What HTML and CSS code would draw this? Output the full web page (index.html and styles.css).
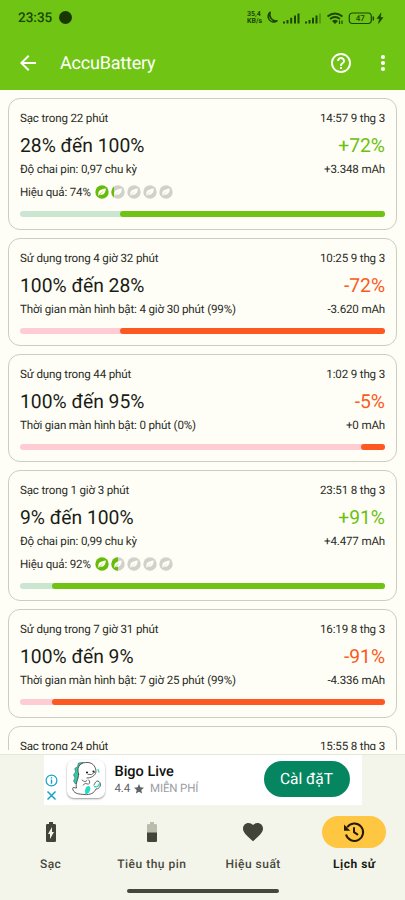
FILE: index.html
```html
<!DOCTYPE html>
<html lang="vi">
<head>
<meta charset="utf-8">
<title>AccuBattery</title>
<link rel="stylesheet" href="styles.css">
</head>
<body>
<svg width="0" height="0" class="defs">
  <defs>
    <symbol id="leaf" viewBox="0 0 14 14">
      <circle cx="7" cy="7" r="6.700" fill="currentColor"/>
      <path d="M3.400 9.600C2.900 5.800 5.600 4.300 10.800 3.600C10.800 8 8.400 10.700 4.700 9.600L3.800 10.700L3.100 10.300Z" fill="#fefef6"/>
      <path d="M4.700 9.400L7.800 6.700" stroke="currentColor" stroke-width=".5"/>
    </symbol>
  </defs>
</svg>
<div class="screen">
  <header class="top">
    <div class="status">
      <span class="clock">23:35</span><span class="dot"></span>
      <span class="speed"><span>35,4</span><span>KB/s</span></span>
      <svg class="sys" width="122" height="18" viewBox="0 0 122 18" fill="none" stroke="#194600">
        <path d="M5.200 3.200A5.300 5.300 0 1 0 12 11.800A6.300 6.300 0 0 1 5.200 3.200Z" stroke-width="1.500" stroke-linejoin="round"/>
        <path d="M19 14.500V12.500M22.500 14.500V11M26.200 14.500V8.800M30 14.500V6.500M33.500 14.500V4.500" stroke-width="2"/>
        <path d="M41 14.500V12.500M44.500 14.500V11M48 14.500V8.800M51.500 14.500V6.500" stroke-width="2"/>
        <path d="M55 14.500V4.500" stroke-width="1.800" opacity=".35"/>
        <path d="M62.500 7.500Q70 1.500 77.500 7.500M65 10Q70 6 75 10" stroke-width="1.700"/>
        <path d="M67 12Q70 9.500 73 12L70 15Z" fill="#194600" stroke="none"/>
        <path d="M74.500 11.500V15M77 11.500V15" stroke-width="1.200"/>
        <rect x="84.300" y="4" width="22" height="10.500" rx="3.200" stroke-width="1.200"/>
        <path d="M108.300 7.500V11.500" stroke-width="1.500"/>
        <text x="95.300" y="12.300" text-anchor="middle" class="level">47</text>
        <path d="M116 4L112 9.500H114.500L113.500 14.500L118 8.500H115.500Z" fill="#194600" stroke="#194600" stroke-width=".5"/>
      </svg>
    </div>
    <div class="appbar">
      <svg class="back" width="24" height="24" viewBox="0 0 24 24"><path d="M20 11H7.830L13.420 5.410L12 4L4 12L12 20L13.410 18.590L7.830 13H20Z" fill="#fff"/></svg>
      <h1>AccuBattery</h1>
      <svg class="help" width="24" height="24" viewBox="0 0 24 24"><path fill="#fff" d="M11 18h2v-2h-2v2zm1-16C6.480 2 2 6.480 2 12s4.480 10 10 10 10-4.480 10-10S17.520 2 12 2zm0 18c-4.410 0-8-3.590-8-8s3.590-8 8-8 8 3.590 8 8-3.590 8-8 8zm0-14c-2.210 0-4 1.790-4 4h2c0-1.100.9-2 2-2s2 .9 2 2c0 2-3 1.750-3 5h2c0-2.250 3-2.500 3-5 0-2.210-1.790-4-4-4z"/></svg>
      <svg class="more" width="24" height="24" viewBox="0 0 24 24" fill="#fff"><circle cx="12" cy="6" r="2.100"/><circle cx="12" cy="12" r="2.100"/><circle cx="12" cy="18" r="2.100"/></svg>
    </div>
  </header>

  <main class="list">
    <article class="card charge">
      <div class="row"><span>Sạc trong 22 phút</span><span>14:57 9 thg 3</span></div>
      <div class="row big"><span>28% đến 100%</span><span class="delta">+72%</span></div>
      <div class="row"><span>Độ chai pin: 0,97 chu kỳ</span><span>+3.348 mAh</span></div>
      <div class="row eff"><span>Hiệu quả: 74%</span><span class="leaves"><svg class="on"><use href="#leaf"/></svg><span class="part"><svg><use href="#leaf"/></svg><span class="fill slim"><svg class="on"><use href="#leaf"/></svg></span></span><svg><use href="#leaf"/></svg><svg><use href="#leaf"/></svg><svg><use href="#leaf"/></svg></span></div>
      <div class="bar"><i style="width:72.600%"></i></div>
    </article>
    <article class="card use">
      <div class="row"><span>Sử dụng trong 4 giờ 32 phút</span><span>10:25 9 thg 3</span></div>
      <div class="row big"><span>100% đến 28%</span><span class="delta">-72%</span></div>
      <div class="row"><span>Thời gian màn hình bật: 4 giờ 30 phút (99%)</span><span>-3.620 mAh</span></div>
      <div class="bar"><i style="width:72.600%"></i></div>
    </article>
    <article class="card use">
      <div class="row"><span>Sử dụng trong 44 phút</span><span>1:02 9 thg 3</span></div>
      <div class="row big"><span>100% đến 95%</span><span class="delta">-5%</span></div>
      <div class="row"><span>Thời gian màn hình bật: 0 phút (0%)</span><span>+0 mAh</span></div>
      <div class="bar"><i style="width:6.600%"></i></div>
    </article>
    <article class="card charge">
      <div class="row"><span>Sạc trong 1 giờ 3 phút</span><span>23:51 8 thg 3</span></div>
      <div class="row big"><span>9% đến 100%</span><span class="delta">+91%</span></div>
      <div class="row"><span>Độ chai pin: 0,99 chu kỳ</span><span>+4.477 mAh</span></div>
      <div class="row eff"><span>Hiệu quả: 92%</span><span class="leaves"><svg class="on"><use href="#leaf"/></svg><span class="part"><svg><use href="#leaf"/></svg><span class="fill half"><svg class="on"><use href="#leaf"/></svg></span></span><svg><use href="#leaf"/></svg><svg><use href="#leaf"/></svg><svg><use href="#leaf"/></svg></span></div>
      <div class="bar"><i style="width:91.200%"></i></div>
    </article>
    <article class="card use">
      <div class="row"><span>Sử dụng trong 7 giờ 31 phút</span><span>16:19 8 thg 3</span></div>
      <div class="row big"><span>100% đến 9%</span><span class="delta">-91%</span></div>
      <div class="row"><span>Thời gian màn hình bật: 7 giờ 25 phút (99%)</span><span>-4.336 mAh</span></div>
      <div class="bar"><i style="width:91.200%"></i></div>
    </article>
    <article class="card charge">
      <div class="row"><span>Sạc trong 24 phút</span><span>15:55 8 thg 3</span></div>
    </article>
  </main>

  <footer class="bottom">
    <div class="ad">
      <div class="marks">
        <svg width="13" height="13" viewBox="0 0 13 13" fill="none" stroke="#12a3c6"><circle cx="6.500" cy="6.500" r="5.400" stroke-width="1.200"/><path d="M6.500 5.500V9.700M6.500 3.200V4.500" stroke-width="1.400"/></svg>
        <svg width="13" height="13" viewBox="0 0 13 13" stroke="#12a3c6" stroke-width="1.500"><path d="M2.500 2.500L10.500 10.500M10.500 2.500L2.500 10.500"/></svg>
      </div>
      <div class="logo">
        <svg width="38" height="38" viewBox="0 0 38 38" fill="none" stroke-linecap="round" stroke-linejoin="round">
          <path d="M16 2.500L11.500 3L10.500 6.500L7.800 8.500L8.500 12L6.500 15L8 18L6.500 21L8.500 24L12 20L13 8Z" fill="#35c9a5" stroke="#27685c" stroke-width=".6"/>
          <path d="M11.500 14C9 5 15 2 21 2.500C27 3 29 8 29 12C28 16 24 18 20 18M11.500 14C12 19 8 23 9.500 28C7 28 5 26 6 30C8 34 12 34 17 34.500C24 35 27 33 29 29C33 29 35 24 32 21.500C29 20 28 23 27 25" fill="#fff" stroke="#333" stroke-width=".8"/>
          <path d="M21 14.500Q25 16 28 12M15 20Q18 23 20 20.500M16 25Q18 22 21 24M22 20Q24 22 22 24" stroke="#444" stroke-width=".8"/>
          <circle cx="20" cy="12.500" r="1.100" fill="#222"/><circle cx="26.500" cy="11.500" r="1.100" fill="#222"/>
          <path d="M22 26C18 26 17.500 31 18.500 34.500C22.500 34 25 28 22 26Z" fill="#24dcc0"/>
          <path d="M27.500 26.500Q31 28 32.500 23.500" stroke="#24dcc0" stroke-width="1.400"/>
          <path d="M31 9.500L32 12" stroke="#24dcc0" stroke-width="1.300"/>
        </svg>
      </div>
      <div class="adtext">
        <div class="name">Bigo Live</div>
        <div class="meta"><span>4.4</span><svg width="10" height="10" viewBox="0 0 24 24"><path fill="#5f6368" d="M12 18.300L19.400 23L17.500 14.500L24 8.800L15.400 8L12 0L8.600 8L0 8.800L6.500 14.500L4.600 23Z"/></svg><span class="free">MIỄN PHÍ</span></div>
      </div>
      <div class="cta">Càl đặT</div>
    </div>
    <nav class="nav">
      <div class="item"><span class="pill"><svg width="24" height="24" viewBox="0 0 24 24"><path fill="#42443a" d="M15.670 4H14V2h-4v2H8.330C7.600 4 7 4.600 7 5.330v15.330C7 21.400 7.600 22 8.330 22h7.330c.74 0 1.340-.6 1.340-1.330V5.330C17 4.600 16.400 4 15.670 4zM11 19v-5H9l4-7v5h2l-4 7z"/></svg></span><span class="label">Sạc</span></div>
      <div class="item"><span class="pill"><svg width="24" height="24" viewBox="0 0 24 24"><path fill="#babcae" d="M17 5.330C17 4.600 16.400 4 15.670 4H14V2h-4v2H8.330C7.600 4 7 4.600 7 5.330V13h10V5.330z"/><path fill="#42443a" d="M7 12.500v8.170C7 21.400 7.600 22 8.330 22h7.330c.74 0 1.340-.6 1.340-1.330V12.500H7z"/></svg></span><span class="label">Tiêu thụ pin</span></div>
      <div class="item"><span class="pill"><svg width="24" height="24" viewBox="0 0 24 24"><path fill="#42443a" d="M12 21.350l-1.450-1.320C5.400 15.360 2 12.280 2 8.500 2 5.420 4.420 3 7.500 3c1.740 0 3.410.81 4.500 2.090C13.090 3.810 14.760 3 16.500 3 19.580 3 22 5.420 22 8.500c0 3.780-3.400 6.860-8.550 11.540L12 21.350z"/></svg></span><span class="label">Hiệu suất</span></div>
      <div class="item active"><span class="pill"><svg width="24" height="24" viewBox="0 0 24 24" fill="none" stroke="#251a00" stroke-width="2"><path d="M5.200 7.300A8.700 8.700 0 1 1 4 14.500M12 7.200V12.200L16 14.800"/><path d="M2 4.500V10.700H8.200Z" fill="#251a00" stroke="none"/></svg></span><span class="label">Lịch sử</span></div>
    </nav>
    <div class="home"></div>
  </footer>
</div>
</body>
</html>
```
FILE: styles.css
```css
* { box-sizing: border-box; }
body { margin: 0; font-family: Roboto, "Noto Sans", sans-serif; color: #2a2b26; text-rendering: geometricPrecision; }
.defs { position: absolute; }
.screen { width: 405px; height: 900px; display: flex; flex-direction: column; overflow: hidden; background: #fefef6; }

.top { height: 90px; flex: none; background: #70c514; }
.status { height: 35px; display: flex; align-items: center; padding: 0 0 0 18px; color: #194600; }
.clock { font-size: 13.500px; font-weight: 500; width: 41px; }
.dot { width: 13px; height: 13px; border-radius: 50%; background: #193800; }
.speed { display: flex; flex-direction: column; margin-left: 175px; width: 17px; font-size: 7px; line-height: 7px; font-weight: 700; }
.sys { margin-left: 1px; flex: none; }
.level { font: 500 8px Roboto, sans-serif; fill: #194600; stroke: none; }
.appbar { height: 55px; display: flex; align-items: center; padding: 0 10px 0 16px; color: #fff; }
.appbar h1 { margin: 2px 0 0 20px; flex: 1; font-size: 18px; font-weight: 400; line-height: 24px; letter-spacing: -.2px; }
.more { margin-left: 18px; }

.list { height: 660px; margin-bottom: 4px; flex: none; overflow: hidden; padding: 8px 8px 0; display: flex; flex-direction: column; gap: 8px; }
.card { flex: none; border: 1px solid #cbccc2; border-radius: 12px; padding: 11px 11px 0; }
.charge { height: 131.500px; }
.use { height: 108.200px; }
.row { display: flex; justify-content: space-between; height: 16px; line-height: 16px; font-size: 11.600px; letter-spacing: -.17px; white-space: nowrap; }
.big { height: 28px; line-height: 28px; margin: 6px 0 1px; font-size: 19.300px; letter-spacing: 0; color: #1a1c16; }
.charge .delta { color: #6cc010; }
.use .delta { color: #fb5a22; }
.eff { justify-content: flex-start; margin-top: 7px; align-items: center; }
.leaves { display: flex; gap: 2px; margin-left: 4px; color: #d1d1cb; }
.leaves svg { width: 14px; height: 14px; display: block; flex: none; }
.leaves .on { color: #67bc0b; }
.part { position: relative; }
.fill { position: absolute; left: 0; top: 0; overflow: hidden; }
.slim { width: 3px; }
.half { width: 7px; }
.bar { display: flex; justify-content: flex-end; height: 6px; margin-top: 11px; border-radius: 3px; }
.bar i { display: block; height: 6px; border-radius: 3px; }
.charge .bar { background: #c8e6d0; }
.charge .bar i { background: #6fc413; }
.use .bar { background: #ffccd4; }
.use .bar i { background: #fd5822; }

.bottom { flex: 1; background: #f4f5ea; border-top: 1px solid #e5e6dc; display: flex; flex-direction: column; align-items: center; }
.ad { width: 318px; height: 50px; background: #fff; display: flex; align-items: center; padding: 0 12px 0 1px; }
.marks { display: flex; flex-direction: column; gap: 2px; padding-top: 16px; }
.logo { width: 38px; height: 38px; margin: -3px 0 0 9px; border-radius: 7px; background: #fff; box-shadow: 0 1px 2px #999; }
.logo svg { display: block; }
.adtext { margin: -1px 0 0 10px; flex: 1; }
.name { font-size: 14.500px; line-height: 18px; font-weight: 500; color: #111; }
.meta { display: flex; align-items: center; gap: 4px; font-size: 11.500px; line-height: 15px; letter-spacing: -.15px; color: #5f6368; }
.free { color: #9b9ea3; margin-left: 2px; }
.cta { width: 86px; height: 36px; border-radius: 18px; margin-top: -3px; background: #068660; color: #fff; font-size: 15.500px; line-height: 36px; text-align: center; }

.nav { display: grid; grid-template-columns: repeat(4, 1fr); width: 405px; padding-top: 11px; }
.item { display: flex; flex-direction: column; align-items: center; color: #46483e; }
.pill { width: 64px; height: 32px; border-radius: 16px; display: flex; align-items: center; justify-content: center; }
.active .pill { background: #ffc641; }
.label { margin-top: 8px; font-size: 12px; line-height: 16px; font-weight: 500; letter-spacing: .5px; }
.active .label { color: #1a1c16; font-weight: 700; }
.home { width: 152px; height: 4px; border-radius: 2px; margin-top: 17px; background: #45473e; }
```
